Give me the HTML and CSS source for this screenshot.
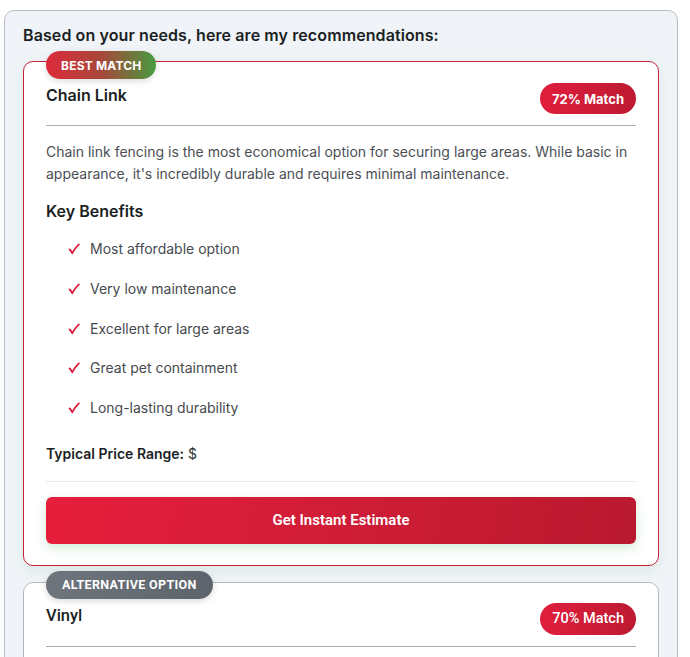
FILE: index.html
```html
<!DOCTYPE html>
<html lang="en">
<head>
<meta charset="utf-8">
<title>Recommendations</title>
<link rel="stylesheet" href="styles.css">
</head>
<body>
<div class="panel">
  <h2 class="panel-title">Based on your needs, here are my recommendations:</h2>

  <div class="card card-best">
    <span class="badge badge-best">BEST MATCH</span>
    <div class="card-head">
      <h3 class="card-title">Chain Link</h3>
      <span class="match">72% Match</span>
    </div>
    <p class="desc">Chain link fencing is the most economical option for securing large areas. While basic in appearance, it's incredibly durable and requires minimal maintenance.</p>
    <h4 class="benefits-title">Key Benefits</h4>
    <ul class="benefits">
      <li><svg class="check" viewBox="0 0 12 12" width="12" height="12"><path d="M1.6 6.4 Q3 8 4.3 10.2 Q7 5 10.8 1.4" fill="none" stroke="#dc1f3c" stroke-width="1.8" stroke-linecap="round" stroke-linejoin="round"/></svg>Most affordable option</li>
      <li><svg class="check" viewBox="0 0 12 12" width="12" height="12"><path d="M1.6 6.4 Q3 8 4.3 10.2 Q7 5 10.8 1.4" fill="none" stroke="#dc1f3c" stroke-width="1.8" stroke-linecap="round" stroke-linejoin="round"/></svg>Very low maintenance</li>
      <li><svg class="check" viewBox="0 0 12 12" width="12" height="12"><path d="M1.6 6.4 Q3 8 4.3 10.2 Q7 5 10.8 1.4" fill="none" stroke="#dc1f3c" stroke-width="1.8" stroke-linecap="round" stroke-linejoin="round"/></svg>Excellent for large areas</li>
      <li><svg class="check" viewBox="0 0 12 12" width="12" height="12"><path d="M1.6 6.4 Q3 8 4.3 10.2 Q7 5 10.8 1.4" fill="none" stroke="#dc1f3c" stroke-width="1.8" stroke-linecap="round" stroke-linejoin="round"/></svg>Great pet containment</li>
      <li><svg class="check" viewBox="0 0 12 12" width="12" height="12"><path d="M1.6 6.4 Q3 8 4.3 10.2 Q7 5 10.8 1.4" fill="none" stroke="#dc1f3c" stroke-width="1.8" stroke-linecap="round" stroke-linejoin="round"/></svg>Long-lasting durability</li>
    </ul>
    <p class="price"><strong>Typical Price Range:</strong> $</p>
    <div class="actions">
      <button class="cta" type="button">Get Instant Estimate</button>
    </div>
  </div>

  <div class="card card-alt">
    <span class="badge badge-alt">ALTERNATIVE OPTION</span>
    <div class="card-head">
      <h3 class="card-title alt-title">Vinyl</h3>
      <span class="match alt-match">70% Match</span>
    </div>
  </div>
</div>
</body>
</html>
```

FILE: styles.css
```css
* { box-sizing: border-box; }

html, body {
  margin: 0;
  padding: 0;
  background: #ffffff;
}

body {
  font-family: Inter, "Noto Sans", sans-serif;
  color: #1f2329;
}

.panel {
  width: 674px;
  margin: 10px 0 0 4px;
  padding: 12px 18px 40px;
  background: #f0f4f8;
  border: 1px solid #b9bcc0;
  border-radius: 10px;
  height: 700px;
}

.panel-title {
  margin: 0 0 14px;
  font-size: 16px;
  line-height: 24px;
  font-weight: 600;
  letter-spacing: 0.1px;
  color: #1b1f24;
}

.card {
  position: relative;
  background: #ffffff;
  border: 1px solid #b4b8bd;
  border-radius: 10px;
  padding: 21px 22px 21px 22px;
  margin-bottom: 16px;
}

.card-best {
  border-color: #c8213a;
  box-shadow: 0 4px 14px rgba(40, 140, 70, 0.10);
}

.badge {
  position: absolute;
  top: -11px;
  left: 22px;
  height: 28px;
  padding: 0 14px;
  border-radius: 14px;
  display: flex;
  align-items: center;
  font-size: 12px;
  font-weight: 700;
  color: #ffffff;
  letter-spacing: 0.2px;
  box-shadow: 0 2px 6px rgba(0, 0, 0, 0.15);
}

.badge-best {
  background: linear-gradient(90deg, #dc2a3a 0%, #a8473a 50%, #479a3f 100%);
  font-family: Inter, sans-serif;
  padding: 0 15px;
}

.badge-alt {
  background: linear-gradient(90deg, #6e757d, #5d646c);
  font-family: Roboto, sans-serif;
  font-size: 12.5px;
  padding: 0 16px;
  letter-spacing: 0.35px;
  top: -12px;
}

.card-head {
  display: flex;
  justify-content: space-between;
  align-items: flex-start;
  padding-bottom: 11px;
  border-bottom: 1px solid #a9acb0;
}

.card-title {
  margin: 0;
  font-size: 16px;
  line-height: 24px;
  font-weight: 600;
  color: #1b1f24;
}

.alt-title {
  font-family: Roboto, sans-serif;
  font-weight: 500;
  font-size: 16.5px;
  line-height: 24px;
}

.match {
  height: 31px;
  padding: 0 12px;
  border-radius: 16px;
  background: linear-gradient(90deg, #e01e3c, #bd1a31);
  color: #ffffff;
  font-size: 13px;
  font-weight: 700;
  display: flex;
  align-items: center;
}

.alt-match {
  font-family: Roboto, sans-serif;
  font-weight: 500;
  font-size: 14.5px;
  height: 32px;
  margin-top: -1px;
}

.desc {
  margin: 15px 0 0;
  font-size: 14px;
  line-height: 21.5px;
  color: #4b4f55;
}

.benefits-title {
  margin: 15px 0 6px;
  font-size: 16px;
  line-height: 24px;
  font-weight: 600;
  color: #1b1f24;
}

.benefits {
  list-style: none;
  margin: 0;
  padding: 0 0 0 22px;
}

.benefits li {
  display: flex;
  align-items: center;
  padding: 9px 0 8.75px;
  font-size: 14px;
  line-height: 22px;
  color: #464a50;
}

.check {
  flex: none;
  margin-right: 10px;
}

.price {
  margin: 15px 0 0;
  font-size: 14px;
  line-height: 22px;
  color: #2b2f35;
  padding-bottom: 16px;
  border-bottom: 1px solid #e6e8eb;
}

.price strong {
  font-weight: 600;
  color: #1b1f24;
}

.actions {
  margin-top: 15px;
}

.cta {
  display: block;
  width: 100%;
  height: 47px;
  border: none;
  border-radius: 6px;
  background: linear-gradient(100deg, #e61e3b 0%, #d01d37 50%, #b9192e 100%);
  color: #ffffff;
  font-family: Roboto, sans-serif;
  font-size: 15px;
  font-weight: 600;
  box-shadow: 0 4px 12px rgba(40, 167, 69, 0.22);
  cursor: pointer;
}
```
